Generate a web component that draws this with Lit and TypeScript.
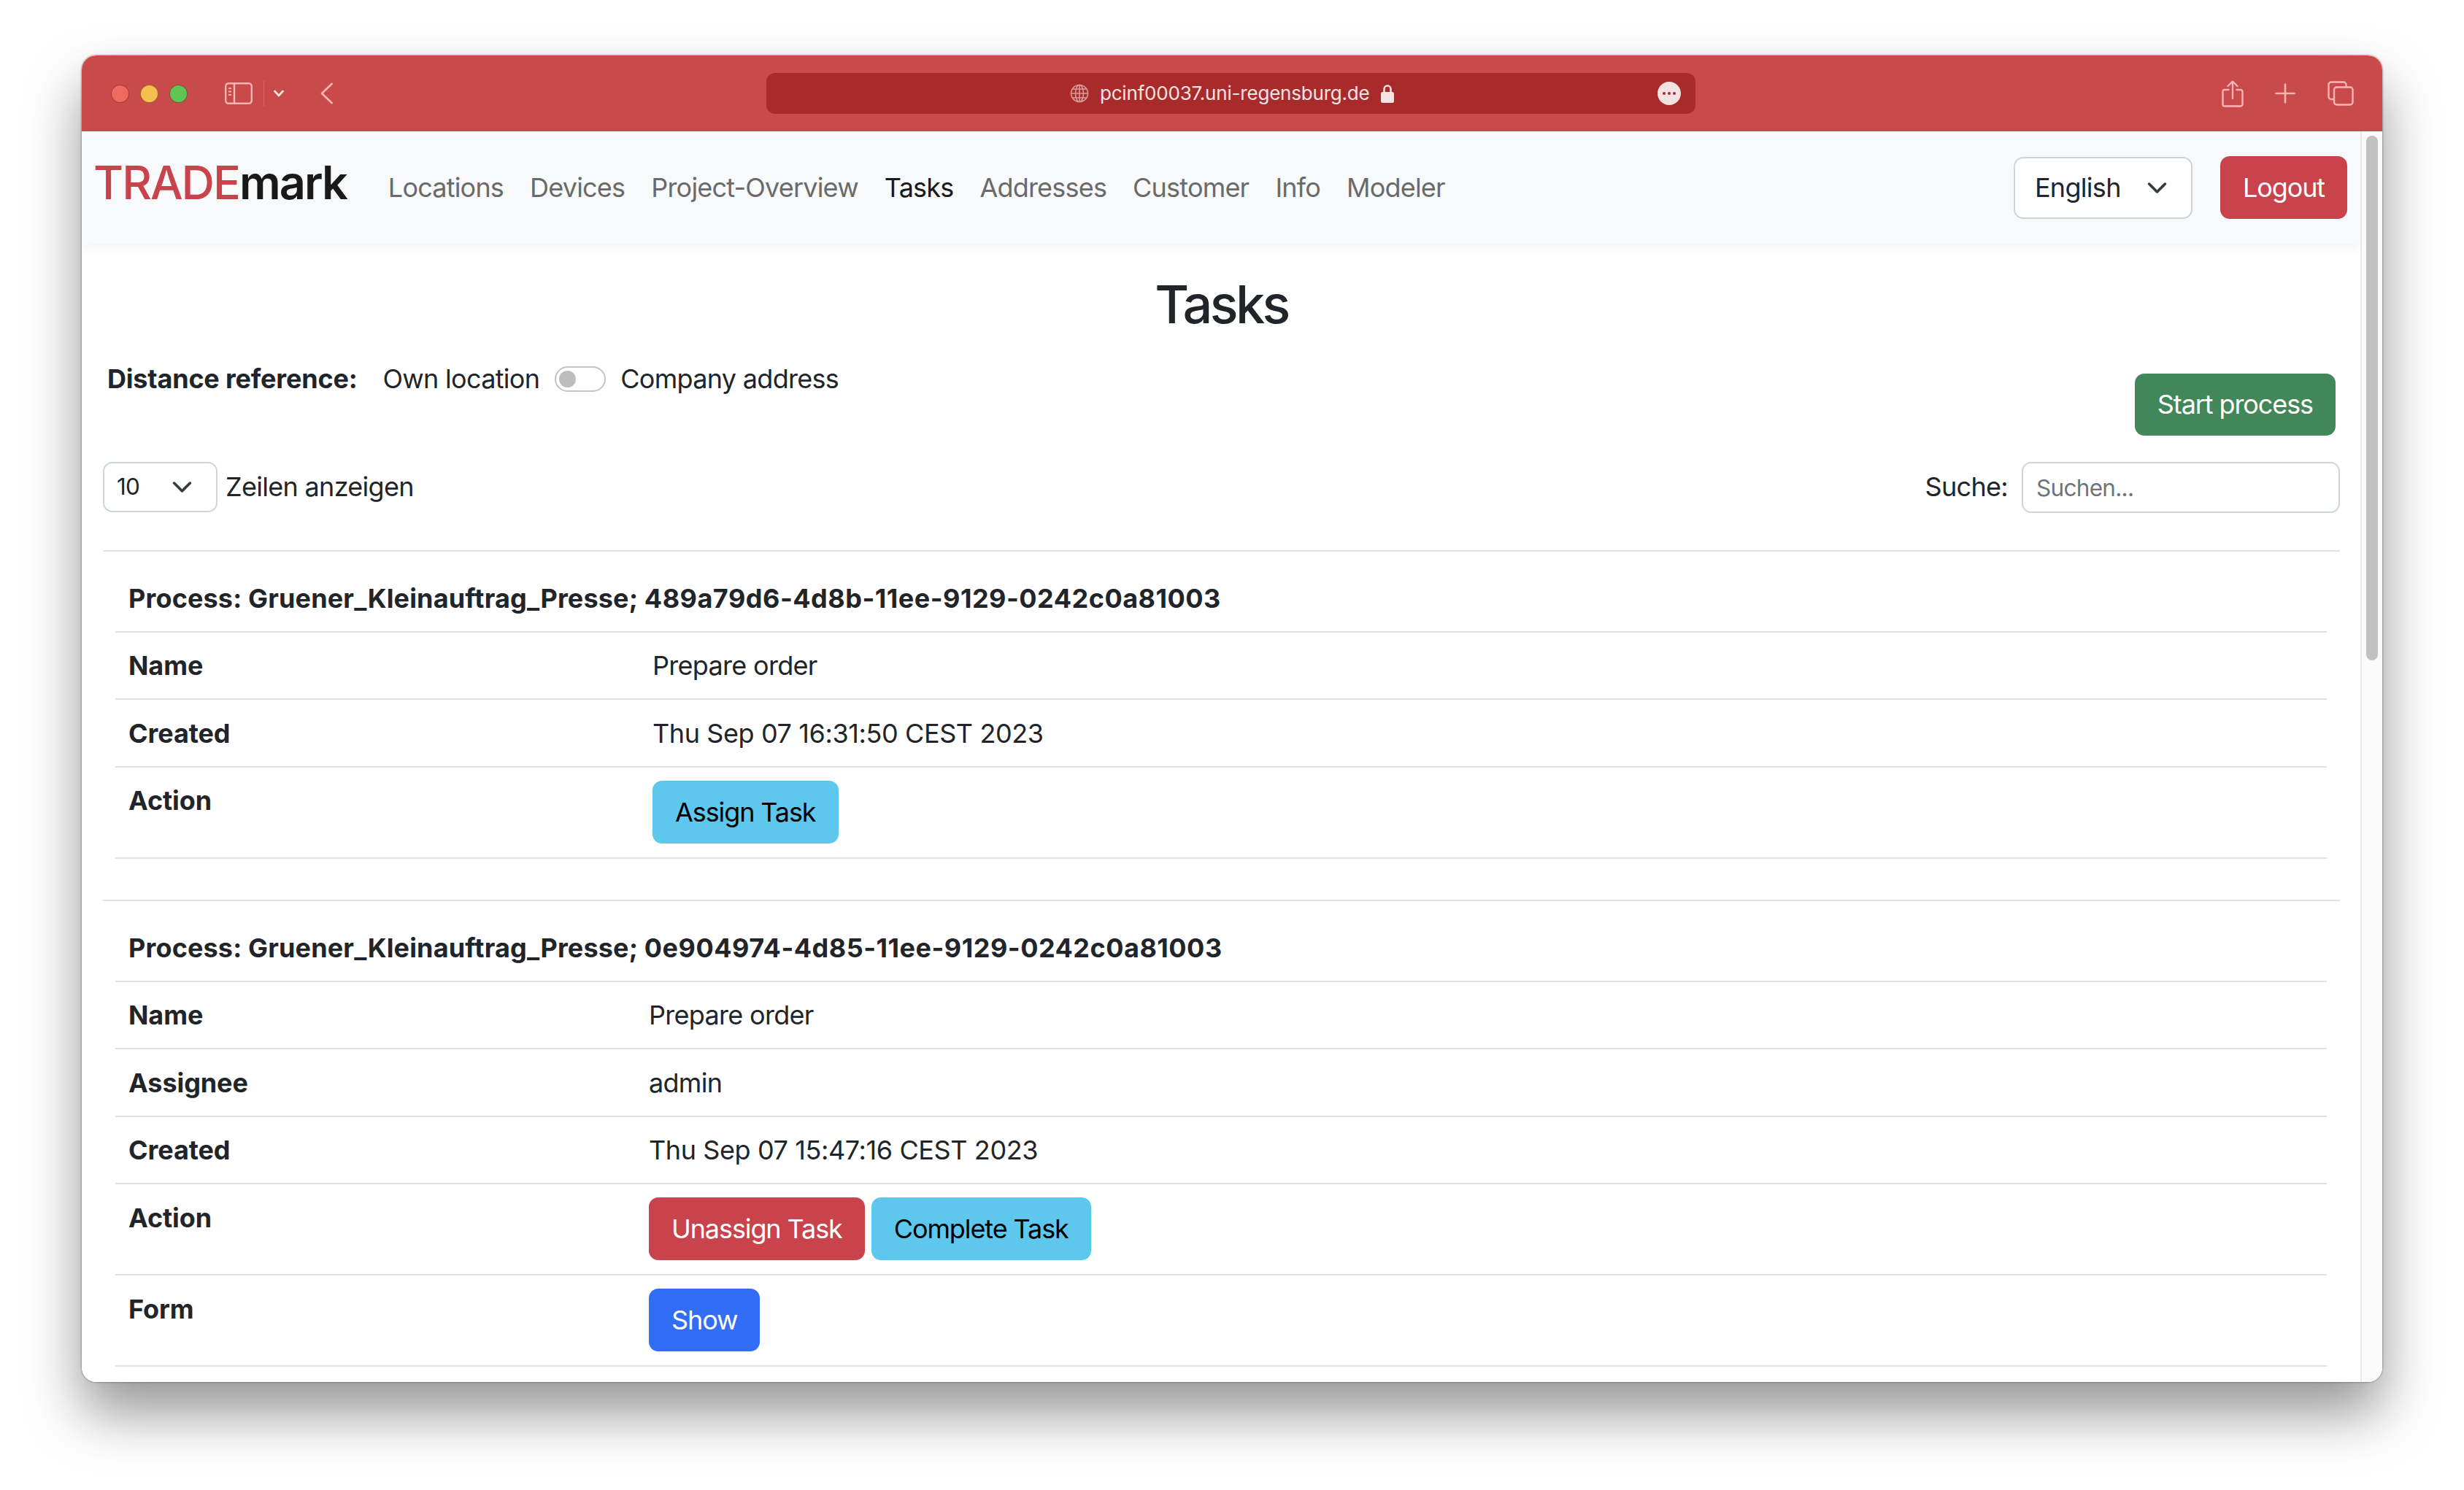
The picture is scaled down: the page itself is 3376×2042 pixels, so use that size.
import { LitElement, html, css } from "lit";
import { customElement } from "lit/decorators.js";

interface Row {
  label: string;
  value?: string;
  buttons?: { text: string; kind: string }[];
}

const PROCESS_1: Row[] = [
  { label: "Name", value: "Prepare order" },
  { label: "Created", value: "Thu Sep 07 16:31:50 CEST 2023" },
  { label: "Action", buttons: [{ text: "Assign Task", kind: "info" }] },
];

const PROCESS_2: Row[] = [
  { label: "Name", value: "Prepare order" },
  { label: "Assignee", value: "admin" },
  { label: "Created", value: "Thu Sep 07 15:47:16 CEST 2023" },
  {
    label: "Action",
    buttons: [
      { text: "Unassign Task", kind: "danger" },
      { text: "Complete Task", kind: "info" },
    ],
  },
  { label: "Form", buttons: [{ text: "Show", kind: "primary" }] },
];

const NAV_LINKS = ["Locations", "Devices", "Project-Overview", "Tasks", "Addresses", "Customer", "Info", "Modeler"];

@customElement("app-root")
export class AppRoot extends LitElement {
  static styles = css`
    :host {
      display: block;
      width: 3376px;
      height: 2042px;
      box-sizing: border-box;
      padding: 76px 112px 148px;
      background: #fff;
      font-family: Inter, "Liberation Sans", sans-serif;
      font-size: 36px;
      line-height: 54px;
      letter-spacing: -0.7px;
      color: #212529;
      overflow: hidden;
    }
    * { box-sizing: border-box; }

    .window {
      height: 100%;
      display: flex;
      flex-direction: column;
      border-radius: 20px;
      overflow: hidden;
      background: #fff;
    }
    .frame {
      height: 100%;
      border-radius: 20px;
      box-shadow: 0 42px 78px rgba(0, 0, 0, 0.42), 0 0 3px rgba(0, 0, 0, 0.55);
    }

    /* safari toolbar */
    .titlebar {
      flex: none;
      height: 104px;
      background: #c94a4a;
      display: grid;
      grid-template-columns: 938px 1273px 1fr;
      align-items: center;
    }
    .tb-left { display: flex; align-items: center; padding-left: 40px; }
    .light { width: 25px; height: 25px; border-radius: 50%; margin-right: 15px; border: 1px solid rgba(110, 30, 30, 0.6); }
    .red { background: #ee6a5f; }
    .yellow { background: #f5bf4f; }
    .green { background: #61c554; }
    .tb-left svg, .tb-right svg { display: block; flex: none; }
    .sidebar-icon { margin-left: 36px; }
    .sep { width: 1px; height: 36px; background: #d9686a; margin: 0 13px 0 15px; }
    .back { margin-left: 50px; }

    .urlbar {
      height: 56px;
      background: #a92a2a;
      border-radius: 12px;
      display: flex;
      align-items: center;
      padding-left: 416px;
      position: relative;
      color: #f6e4e4;
      font-size: 26px;
      letter-spacing: -0.2px;
    }
    .urlbar .host { margin: 0 15px 0 15px; }
    .more {
      position: absolute;
      right: 20px;
      top: 12px;
      width: 32px;
      height: 32px;
      border-radius: 50%;
      background: #f3e2e2;
      display: flex;
      align-items: center;
      justify-content: center;
      gap: 3px;
    }
    .more i { width: 4px; height: 4px; border-radius: 50%; background: #a92a2a; }
    .tb-right { display: flex; align-items: center; padding-left: 721px; }
    .tb-right .plus { margin-left: 43px; }
    .tb-right .tabs { margin-left: 44px; }

    .viewport { flex: 1; min-height: 0; display: flex; }
    .page { flex: 1; min-width: 0; }
    .scrollbar {
      flex: none;
      width: 30px;
      background: #fafafa;
      border-left: 2px solid #e8e8e8;
      padding: 6px 0 0 6px;
    }
    .thumb { width: 16px; height: 719px; border-radius: 8px; background: #c1c1c1; }

    /* navbar */
    nav {
      height: 154px;
      background: #f8f9fa;
      box-shadow: 0 6px 14px rgba(0, 0, 0, 0.05);
      display: flex;
      align-items: center;
      padding: 0 18px 0 16px;
    }
    .brand {
      font-size: 63px;
      line-height: 76px;
      letter-spacing: -2px;
      color: #191919;
      font-weight: 600;
      margin: -14px 39px 0 0;
    }
    .brand span { color: #c9434c; font-weight: 500; }
    nav a { padding: 0 18px; color: #6a6a6a; white-space: nowrap; letter-spacing: -0.8px; }
    nav a.active { color: #1a1a1a; }
    .nav-end { margin-left: auto; display: flex; align-items: center; gap: 38px; }

    select, input {
      font: inherit;
      letter-spacing: inherit;
      color: #212529;
      background-color: #fff;
      border: 2px solid #ced4da;
      border-radius: 13px;
      outline: none;
      margin: 0;
    }
    select {
      appearance: none;
      background-image: url("data:image/svg+xml,%3Csvg xmlns='http://www.w3.org/2000/svg' viewBox='0 0 16 16'%3E%3Cpath fill='none' stroke='%23343a40' stroke-linecap='round' stroke-linejoin='round' stroke-width='2' d='M2 5l6 6 6-6'/%3E%3C/svg%3E");
      background-repeat: no-repeat;
    }
    .lang {
      width: 245px;
      height: 85px;
      padding: 0 0 0 27px;
      background-position: right 32px center;
      background-size: 29px;
    }
    .btn {
      display: inline-block;
      height: 86px;
      padding: 0 29px;
      border: 2px solid transparent;
      border-radius: 13px;
      font: inherit;
      line-height: 82px;
      letter-spacing: -1.1px;
      white-space: nowrap;
    }
    .danger { background: #c9434c; color: #fff; }
    .info { background: #5dc7ee; color: #000; }
    .success { background: #41875a; color: #fff; }
    .primary { background: #316ef5; color: #fff; }

    /* content */
    main { padding: 0 28px 0 29px; }
    h1 {
      margin: 0;
      padding-top: 40px;
      height: 131px;
      text-align: center;
      font-size: 72px;
      line-height: 86px;
      font-weight: 500;
      letter-spacing: -3.6px;
    }
    .options { display: flex; justify-content: space-between; height: 168px; padding-left: 6px; }
    .distance { display: flex; align-items: center; height: 54px; margin-top: 27px; }
    .distance b { font-weight: 700; letter-spacing: -0.2px; margin-right: 35px; }
    .switch {
      width: 70px;
      height: 35px;
      margin: 0 20px 0 21px;
      border: 2px solid #c4c4c4;
      border-radius: 18px;
      padding: 4px;
    }
    .switch i { display: block; width: 23px; height: 23px; border-radius: 50%; background: #bdbdbd; }
    .options .btn { margin: 47px 6px 0 0; height: 85px; line-height: 81px; }

    .controls { display: flex; justify-content: space-between; align-items: center; height: 70px; }
    .controls .left, .controls .right { display: flex; align-items: center; }
    .controls span { margin-top: -3px; }
    .size {
      width: 157px;
      height: 69px;
      margin: -2px 11px 0 0;
      padding: 0 0 0 17px;
      font-size: 31.5px;
      background-position: right 32px center;
      background-size: 29px;
    }
    .search { width: 436px; height: 70px; padding: 0 18px; font-size: 31.5px; margin-left: 19px; }
    .search::placeholder { color: #6c757d; opacity: 1; }

    .process { border-top: 2px solid #dee2e6; margin-top: 51px; padding: 18px 18px 0 17px; height: 479px; }
    .process + .process { margin-top: 0; height: auto; }
    table { width: 100%; border-collapse: collapse; }
    th, td {
      padding: 18.5px 18px 18px;
      border-bottom: 2px solid #dee2e6;
      text-align: left;
      vertical-align: top;
      font-weight: 400;
      white-space: nowrap;
    }
    th { font-weight: 700; letter-spacing: -0.1px; }
    .caption { letter-spacing: 0.15px; }
    .caption span { letter-spacing: 0.5px; }
    td.date { letter-spacing: -0.4px; }
    .one th.label { width: 718px; }
    .two th.label { width: 713px; }
    td.actions { padding: 18px 18px 19px; }
    td.actions .btn + .btn { margin-left: 9px; }
  `;

  private renderTable(id: string, cls: string, rows: Row[]) {
    return html`
      <section class="process ${cls}">
        <table>
          <thead><tr><th class="caption" colspan="2">Process: Gruener_Kleinauftrag_Presse; <span>${id}</span></th></tr></thead>
          <tbody>
            ${rows.map(
              (r) => html`
                <tr>
                  <th class="label">${r.label}</th>
                  ${r.buttons
                    ? html`<td class="actions">${r.buttons.map((b) => html`<button class="btn ${b.kind}">${b.text}</button>`)}</td>`
                    : html`<td class=${r.label === "Created" ? "date" : ""}>${r.value}</td>`}
                </tr>
              `,
            )}
          </tbody>
        </table>
      </section>
    `;
  }

  private renderToolbar() {
    const stroke = "#ffb3b3";
    return html`
      <div class="titlebar">
        <div class="tb-left">
          <span class="light red"></span><span class="light yellow"></span><span class="light green"></span>
          <svg class="sidebar-icon" width="38" height="30" viewBox="0 0 38 30" fill="none" stroke="${stroke}" stroke-width="2.4">
            <rect x="1.2" y="1.2" width="35.6" height="27.6" rx="4"></rect>
            <path d="M13 1v28"></path>
            <path d="M5 8h4M5 12.5h4M5 17h4" stroke-width="2"></path>
          </svg>
          <span class="sep"></span>
          <svg width="14" height="10" viewBox="0 0 14 10" fill="none" stroke="#ffe4e4" stroke-width="2.6" stroke-linecap="round" stroke-linejoin="round"><path d="M1.5 2 7 8l5.5-6"></path></svg>
          <svg class="back" width="18" height="30" viewBox="0 0 18 30" fill="none" stroke="${stroke}" stroke-width="2.8" stroke-linecap="round" stroke-linejoin="round"><path d="M15.5 2 2 15l13.5 13"></path></svg>
        </div>
        <div class="urlbar">
          <svg width="26" height="26" viewBox="0 0 26 26" fill="none" stroke="#d99a9a" stroke-width="1.6">
            <circle cx="13" cy="13" r="11.5"></circle>
            <ellipse cx="13" cy="13" rx="5.5" ry="11.5"></ellipse>
            <path d="M13 1.5v23M1.5 13h23M3.5 7h19M3.5 19h19"></path>
          </svg>
          <span class="host">pcinf00037.uni-regensburg.de</span>
          <svg width="18" height="26" viewBox="0 0 18 26"><path fill="none" stroke="#f6e4e4" stroke-width="2.5" d="M4.5 12V7a4.5 4.5 0 0 1 9 0v5"></path><rect x="0" y="11" width="18" height="15" rx="2.5" fill="#f6e4e4"></rect></svg>
          <span class="more"><i></i><i></i><i></i></span>
        </div>
        <div class="tb-right">
          <svg width="30" height="37" viewBox="0 0 30 37" fill="none" stroke="${stroke}" stroke-width="2.4" stroke-linecap="round" stroke-linejoin="round">
            <path d="M9.5 13H4a2.5 2.5 0 0 0-2.5 2.5V33A2.5 2.5 0 0 0 4 35.5h22a2.5 2.5 0 0 0 2.5-2.5V15.5A2.5 2.5 0 0 0 26 13h-5.5"></path>
            <path d="M15 25V2M8.5 8 15 1.5 21.5 8"></path>
          </svg>
          <svg class="plus" width="28" height="28" viewBox="0 0 28 28" stroke="${stroke}" stroke-width="2.6" stroke-linecap="round"><path d="M14 1.5v25M1.5 14h25"></path></svg>
          <svg class="tabs" width="36" height="34" viewBox="0 0 36 34" fill="none" stroke="${stroke}" stroke-width="2.4">
            <path d="M8 25H5a3.5 3.5 0 0 1-3.5-3.5V5A3.5 3.5 0 0 1 5 1.5h17A3.5 3.5 0 0 1 25.5 5v3"></path>
            <rect x="9" y="8.5" width="25.5" height="24" rx="3.5"></rect>
          </svg>
        </div>
      </div>
    `;
  }

  render() {
    return html`
      <div class="frame">
        <div class="window">
          ${this.renderToolbar()}
          <div class="viewport">
            <div class="page">
              <nav>
                <div class="brand"><span>TRADE</span>mark</div>
                ${NAV_LINKS.map((l) => html`<a class=${l === "Tasks" ? "active" : ""}>${l}</a>`)}
                <div class="nav-end">
                  <select class="lang"><option>English</option></select>
                  <button class="btn danger">Logout</button>
                </div>
              </nav>
              <main>
                <h1>Tasks</h1>
                <div class="options">
                  <div class="distance">
                    <b>Distance reference:</b>
                    <span>Own location</span>
                    <span class="switch"><i></i></span>
                    <span>Company address</span>
                  </div>
                  <button class="btn success">Start process</button>
                </div>
                <div class="controls">
                  <div class="left">
                    <select class="size"><option>10</option></select>
                    <span>Zeilen anzeigen</span>
                  </div>
                  <div class="right">
                    <span>Suche:</span>
                    <input class="search" placeholder="Suchen..." />
                  </div>
                </div>
                ${this.renderTable("489a79d6-4d8b-11ee-9129-0242c0a81003", "one", PROCESS_1)}
                ${this.renderTable("0e904974-4d85-11ee-9129-0242c0a81003", "two", PROCESS_2)}
              </main>
            </div>
            <div class="scrollbar"><div class="thumb"></div></div>
          </div>
        </div>
      </div>
    `;
  }
}
